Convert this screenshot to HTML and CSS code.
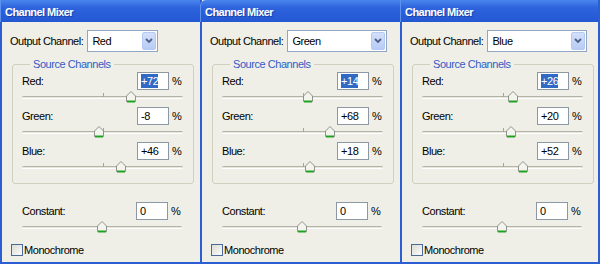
FILE: index.html
```html
<!DOCTYPE html>
<html lang="en">
<head>
    <meta charset="UTF-8">
    <title>Channel Mixer</title>
    <link rel="stylesheet" href="styles.css">
</head>
<body>
    <div class="mixers">
        <section class="panel">
            <header class="titlebar">Channel Mixer</header>
            <div class="output-row">
                <span class="label">Output Channel:</span>
                <div class="select select-short">
                    <span class="select-text">Red</span>
                    <span class="drop"><svg viewBox="0 0 8 6" width="8" height="6"><polyline points="1,1 4,4 7,1"></polyline></svg></span>
                </div>
            </div>
            <fieldset class="sources">
                <legend>Source Channels</legend>
                <div class="channel">
                    <div class="value-row"><span class="name">Red:</span><span class="field"><span class="selected">+72</span></span><span class="pct">%</span></div>
                    <div class="slider"><div class="track"></div><svg class="thumb" style="left: 68%" viewBox="0 0 11 12" width="11" height="12"><path class="thumb-body" d="M5.5 0.5 L10 5 L10 10.5 L1 10.5 L1 5 Z"></path><path class="thumb-foot" d="M1.5 10.5 L9.5 10.5"></path></svg></div>
                </div>
                <div class="channel">
                    <div class="value-row"><span class="name">Green:</span><span class="field">-8</span><span class="pct">%</span></div>
                    <div class="slider"><div class="track"></div><svg class="thumb" style="left: 48%" viewBox="0 0 11 12" width="11" height="12"><path class="thumb-body" d="M5.5 0.5 L10 5 L10 10.5 L1 10.5 L1 5 Z"></path><path class="thumb-foot" d="M1.5 10.5 L9.5 10.5"></path></svg></div>
                </div>
                <div class="channel">
                    <div class="value-row"><span class="name">Blue:</span><span class="field">+46</span><span class="pct">%</span></div>
                    <div class="slider"><div class="track"></div><svg class="thumb" style="left: 61.5%" viewBox="0 0 11 12" width="11" height="12"><path class="thumb-body" d="M5.5 0.5 L10 5 L10 10.5 L1 10.5 L1 5 Z"></path><path class="thumb-foot" d="M1.5 10.5 L9.5 10.5"></path></svg></div>
                </div>
            </fieldset>
            <div class="channel constant">
                <div class="value-row"><span class="name">Constant:</span><span class="field">0</span><span class="pct">%</span></div>
                <div class="slider"><div class="track"></div><svg class="thumb" style="left: 50%" viewBox="0 0 11 12" width="11" height="12"><path class="thumb-body" d="M5.5 0.5 L10 5 L10 10.5 L1 10.5 L1 5 Z"></path><path class="thumb-foot" d="M1.5 10.5 L9.5 10.5"></path></svg></div>
            </div>
            <div class="mono"><span class="checkbox"></span>Monochrome</div>
        </section>

        <section class="panel">
            <header class="titlebar titlebar-round">Channel Mixer</header>
            <div class="output-row">
                <span class="label">Output Channel:</span>
                <div class="select select-wide">
                    <span class="select-text">Green</span>
                    <span class="drop"><svg viewBox="0 0 8 6" width="8" height="6"><polyline points="1,1 4,4 7,1"></polyline></svg></span>
                </div>
            </div>
            <fieldset class="sources">
                <legend>Source Channels</legend>
                <div class="channel">
                    <div class="value-row"><span class="name">Red:</span><span class="field"><span class="selected">+14</span></span><span class="pct">%</span></div>
                    <div class="slider"><div class="track"></div><svg class="thumb" style="left: 53.5%" viewBox="0 0 11 12" width="11" height="12"><path class="thumb-body" d="M5.5 0.5 L10 5 L10 10.5 L1 10.5 L1 5 Z"></path><path class="thumb-foot" d="M1.5 10.5 L9.5 10.5"></path></svg></div>
                </div>
                <div class="channel">
                    <div class="value-row"><span class="name">Green:</span><span class="field">+68</span><span class="pct">%</span></div>
                    <div class="slider"><div class="track"></div><svg class="thumb" style="left: 67%" viewBox="0 0 11 12" width="11" height="12"><path class="thumb-body" d="M5.5 0.5 L10 5 L10 10.5 L1 10.5 L1 5 Z"></path><path class="thumb-foot" d="M1.5 10.5 L9.5 10.5"></path></svg></div>
                </div>
                <div class="channel">
                    <div class="value-row"><span class="name">Blue:</span><span class="field">+18</span><span class="pct">%</span></div>
                    <div class="slider"><div class="track"></div><svg class="thumb" style="left: 54.5%" viewBox="0 0 11 12" width="11" height="12"><path class="thumb-body" d="M5.5 0.5 L10 5 L10 10.5 L1 10.5 L1 5 Z"></path><path class="thumb-foot" d="M1.5 10.5 L9.5 10.5"></path></svg></div>
                </div>
            </fieldset>
            <div class="channel constant">
                <div class="value-row"><span class="name">Constant:</span><span class="field">0</span><span class="pct">%</span></div>
                <div class="slider"><div class="track"></div><svg class="thumb" style="left: 50%" viewBox="0 0 11 12" width="11" height="12"><path class="thumb-body" d="M5.5 0.5 L10 5 L10 10.5 L1 10.5 L1 5 Z"></path><path class="thumb-foot" d="M1.5 10.5 L9.5 10.5"></path></svg></div>
            </div>
            <div class="mono"><span class="checkbox"></span>Monochrome</div>
        </section>

        <section class="panel panel-last">
            <header class="titlebar">Channel Mixer</header>
            <div class="output-row">
                <span class="label">Output Channel:</span>
                <div class="select select-wide">
                    <span class="select-text">Blue</span>
                    <span class="drop"><svg viewBox="0 0 8 6" width="8" height="6"><polyline points="1,1 4,4 7,1"></polyline></svg></span>
                </div>
            </div>
            <fieldset class="sources">
                <legend>Source Channels</legend>
                <div class="channel">
                    <div class="value-row"><span class="name">Red:</span><span class="field"><span class="selected">+26</span></span><span class="pct">%</span></div>
                    <div class="slider"><div class="track"></div><svg class="thumb" style="left: 56.5%" viewBox="0 0 11 12" width="11" height="12"><path class="thumb-body" d="M5.5 0.5 L10 5 L10 10.5 L1 10.5 L1 5 Z"></path><path class="thumb-foot" d="M1.5 10.5 L9.5 10.5"></path></svg></div>
                </div>
                <div class="channel">
                    <div class="value-row"><span class="name">Green:</span><span class="field">+20</span><span class="pct">%</span></div>
                    <div class="slider"><div class="track"></div><svg class="thumb" style="left: 55%" viewBox="0 0 11 12" width="11" height="12"><path class="thumb-body" d="M5.5 0.5 L10 5 L10 10.5 L1 10.5 L1 5 Z"></path><path class="thumb-foot" d="M1.5 10.5 L9.5 10.5"></path></svg></div>
                </div>
                <div class="channel">
                    <div class="value-row"><span class="name">Blue:</span><span class="field">+52</span><span class="pct">%</span></div>
                    <div class="slider"><div class="track"></div><svg class="thumb" style="left: 63%" viewBox="0 0 11 12" width="11" height="12"><path class="thumb-body" d="M5.5 0.5 L10 5 L10 10.5 L1 10.5 L1 5 Z"></path><path class="thumb-foot" d="M1.5 10.5 L9.5 10.5"></path></svg></div>
                </div>
            </fieldset>
            <div class="channel constant">
                <div class="value-row"><span class="name">Constant:</span><span class="field">0</span><span class="pct">%</span></div>
                <div class="slider"><div class="track"></div><svg class="thumb" style="left: 50%" viewBox="0 0 11 12" width="11" height="12"><path class="thumb-body" d="M5.5 0.5 L10 5 L10 10.5 L1 10.5 L1 5 Z"></path><path class="thumb-foot" d="M1.5 10.5 L9.5 10.5"></path></svg></div>
            </div>
            <div class="mono"><span class="checkbox"></span>Monochrome</div>
        </section>
    </div>
</body>
</html>
```

FILE: styles.css
```css
* {
    margin: 0;
    padding: 0;
    box-sizing: border-box;
}

body {
    background: #efefe7;
    font-family: 'Liberation Sans', Arial, sans-serif;
    font-size: 11px;
    letter-spacing: -0.45px;
    color: #000;
}

.mixers {
    display: flex;
    width: 600px;
    height: 264px;
    background: #2b5dd3;
}

.panel {
    width: 200px;
    height: 264px;
    display: flex;
    flex-direction: column;
    background: #efefe7;
    border-left: 2px solid #2b5dd3;
    border-bottom: 2px solid #2b5dd3;
}

.panel-last {
    border-right: 2px solid #2b5dd3;
}

.titlebar {
    height: 22px;
    padding: 2px 0 0 4px;
    line-height: 20px;
    font-weight: bold;
    color: #fff;
    letter-spacing: -0.55px;
    background: linear-gradient(#4a86ec 0%, #2d63dc 35%, #2358d2 100%);
    text-shadow: 1px 1px 0 rgba(10, 30, 110, 0.45);
    margin-left: -2px;
    border-left: 1px solid #5d93f0;
}

.titlebar-round {
    border-top-left-radius: 6px;
}

.output-row {
    display: flex;
    align-items: center;
    gap: 4px;
    margin: 8px 0 0 8px;
}

.select {
    height: 22px;
    display: flex;
    align-items: center;
    justify-content: space-between;
    background: #fff;
    border: 1px solid #8fa6c4;
    padding: 1px 1px 1px 4px;
}

.select-short { width: 71px; }
.select-wide { width: 100px; }

.drop {
    width: 14px;
    height: 18px;
    display: flex;
    align-items: center;
    justify-content: center;
    background: linear-gradient(#d4e0fb, #b7cbf5);
    border: 1px solid #b6c9f3;
    border-radius: 2px;
}

.drop polyline {
    fill: none;
    stroke: #4d6185;
    stroke-width: 1.8;
}

.sources {
    width: 182px;
    margin: 6px 0 0 10px;
    border: 1px solid #d0d0bf;
    border-radius: 3px;
    padding: 1px 10px 6px 9px;
}

.sources legend {
    color: #2f5dc8;
    padding: 0 3px;
    margin-left: 8px;
    line-height: 13px;
}

.constant {
    width: 160px;
    margin: 18px 0 0 20px;
}

.value-row {
    height: 18px;
    display: flex;
    align-items: center;
}

.name {
    flex: 1;
}

.field {
    width: 32px;
    height: 18px;
    background: #fff;
    border: 1px solid #8d98a6;
    padding: 0 0 0 3px;
    line-height: 16px;
}

.selected {
    background: #316ac5;
    color: #fff;
    padding: 1px 0;
}

.pct {
    width: 11px;
    margin-left: 3px;
}

.slider {
    position: relative;
    height: 17px;
    padding-top: 6px;
}

.slider::before {
    content: '';
    position: absolute;
    left: 50%;
    top: 3px;
    width: 1px;
    height: 4px;
    background: #a4a49a;
}

.track {
    height: 3px;
    background: #e6e6dc;
    border-top: 1px solid #b3b3a8;
    border-bottom: 1px solid #fff;
    border-radius: 2px;
}

.thumb {
    position: absolute;
    top: 1px;
    transform: translateX(-50%);
}

.thumb-body {
    fill: #f3f4ee;
    stroke: #8e938c;
    stroke-width: 1;
}

.thumb-foot {
    stroke: #21a121;
    stroke-width: 2;
}

.mono {
    display: flex;
    align-items: center;
    margin: 7px 0 0 9px;
}

.checkbox {
    width: 12px;
    height: 12px;
    margin-right: 1px;
    border: 1px solid #4b6a98;
    background: linear-gradient(135deg, #dcdcd6, #fbfbf9);
}
```
